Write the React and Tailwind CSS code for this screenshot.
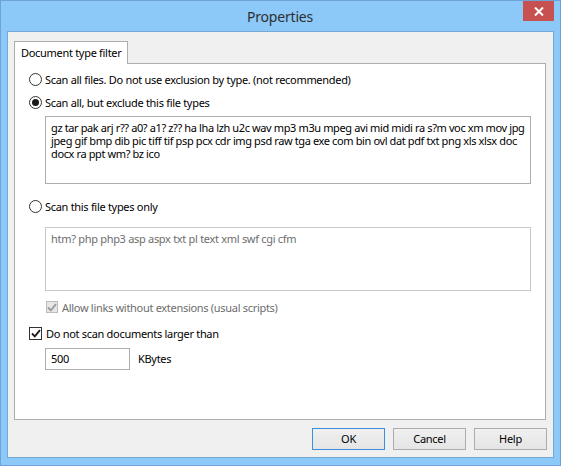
const font = { fontFamily: '"Noto Sans", "Liberation Sans", sans-serif' };

const Radio = ({ checked, label }) => (
  <div className="flex items-center h-[16px]">
    <span className="w-[13px] h-[13px] rounded-full border border-[#333333] bg-white flex items-center justify-center">
      {checked && <span className="w-[7px] h-[7px] rounded-full bg-[#1a1a1a]" />}
    </span>
    <span className="ml-[3px] text-[11px] tracking-[-0.3px] text-black leading-none whitespace-nowrap">{label}</span>
  </div>
);

const CheckBox = ({ label, disabled }) => (
  <div className="flex items-center h-[16px]">
    <span
      className={
        disabled
          ? "w-[12px] h-[12px] border border-[#bcbcbc] bg-[#e6e6e6] flex items-center justify-center"
          : "w-[13px] h-[13px] border border-[#333333] bg-white flex items-center justify-center"
      }
    >
      <svg width="10" height="9" viewBox="0 0 10 9">
        <path
          d="M1 4.5 L3.8 7.3 L9 1.2"
          fill="none"
          stroke={disabled ? "#9a9a9a" : "#1a1a1a"}
          strokeWidth="1.8"
        />
      </svg>
    </span>
    <span
      className={
        "ml-[4px] text-[11px] tracking-[-0.3px] leading-none whitespace-nowrap " +
        (disabled ? "text-[#6d6d6d]" : "text-black")
      }
    >
      {label}
    </span>
  </div>
);

const Button = ({ children, primary }) => (
  <button
    className={
      "w-[73px] h-[22px] text-[11px] tracking-[-0.3px] text-black bg-gradient-to-b from-[#f0f0f0] to-[#e5e5e5] border " +
      (primary ? "border-[#3c8ee0]" : "border-[#acacac]")
    }
  >
    {children}
  </button>
);

export default function App() {
  return (
    <div
      style={font}
      className="w-[561px] h-[466px] bg-[#8cc8f8] border border-[#6fa3d6] flex flex-col"
    >
      {/* Title bar */}
      <div className="h-[30px] px-[6px] flex items-start">
        <div className="flex-1 flex justify-center pl-[30px] pt-[5px]">
          <span className="text-[14px] tracking-[-0.2px] text-[#2f2f2f]">Properties</span>
        </div>
        <div className="w-[31px] h-[20px] bg-[#c75050] flex items-center justify-center">
          <svg width="10" height="9" viewBox="0 0 10 9">
            <path d="M1 0.5 L9 8.5 M9 0.5 L1 8.5" stroke="white" strokeWidth="2" />
          </svg>
        </div>
      </div>

      {/* Client area */}
      <div className="mx-[6px] h-[427px] bg-[#f0f0f0] border border-[#78a9d6] flex flex-col">
        <div className="pl-[6px] pr-[7px] pt-[9px]">
          {/* Tab */}
          <div className="w-[114px] h-[23px] bg-white border border-b-0 border-[#adadad] flex items-center pl-[6px] relative z-10 -mb-px">
            <span className="text-[11px] tracking-[-0.3px] text-black whitespace-nowrap">Document type filter</span>
          </div>
          {/* Panel */}
          <div className="h-[357px] bg-white border border-[#adadad] pl-[14px] pt-[7px]">
            <Radio label="Scan all files. Do not use exclusion by type. (not recommended)" />
            <div className="mt-[7px]">
              <Radio checked label="Scan all, but exclude this file types" />
            </div>
            <div className="mt-[6px] ml-[16px] w-[486px] h-[68px] border border-[#abadb3] px-[5px] pt-[4px] text-[11px] tracking-[-0.38px] leading-[13px] text-black whitespace-nowrap">
              gz tar pak arj r?? a0? a1? z?? ha lha lzh u2c wav mp3 m3u mpeg avi mid midi ra s?m voc xm mov jpg
              <br />
              jpeg gif bmp dib pic tiff tif psp pcx cdr img psd raw tga exe com bin ovl dat pdf txt png xls xlsx doc
              <br />
              docx ra ppt wm? bz ico
            </div>
            <div className="mt-[14px]">
              <Radio label="Scan this file types only" />
            </div>
            <div className="mt-[13px] ml-[16px] w-[486px] h-[64px] border border-[#c8c8c8] px-[5px] pt-[4px] text-[11px] tracking-[-0.3px] leading-[13px] text-[#6d6d6d]">
              htm? php php3 asp aspx txt pl text xml swf cgi cfm
            </div>
            <div className="mt-[8px] ml-[17px]">
              <CheckBox disabled label="Allow links without extensions (usual scripts)" />
            </div>
            <div className="mt-[10px]">
              <CheckBox label="Do not scan documents larger than" />
            </div>
            <div className="mt-[7px] ml-[16px] flex items-center">
              <div className="w-[85px] h-[22px] border border-[#abadb3] px-[5px] flex items-center text-[11px] tracking-[-0.3px] text-black">
                500
              </div>
              <span className="ml-[8px] text-[11px] tracking-[-0.3px] text-black">KBytes</span>
            </div>
          </div>
        </div>
        {/* Buttons */}
        <div className="mt-[8px] pr-[6px] flex justify-end gap-[8px]">
          <Button primary>OK</Button>
          <Button>Cancel</Button>
          <Button>Help</Button>
        </div>
      </div>
    </div>
  );
}
